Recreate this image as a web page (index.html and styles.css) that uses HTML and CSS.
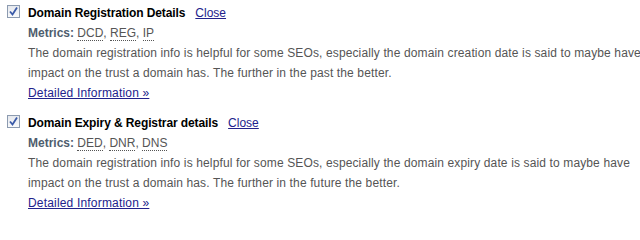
FILE: index.html
```html
<!DOCTYPE html>
<html>
<head>
<meta charset="utf-8">
<link rel="stylesheet" href="styles.css">
</head>
<body>
<div class="list">
  <div class="item">
    <span class="check"><svg width="13" height="13" viewBox="0 0 13 13"><path d="M3 6.5 L5.5 9.5 L10 2.5" fill="none" stroke="#3a5aa8" stroke-width="1.8"/></svg></span>
    <div class="content">
      <div class="title"><b>Domain Registration Details</b><a href="#" class="close">Close</a></div>
      <div class="metrics"><span class="label">Metrics:</span> <abbr>DCD</abbr>, <abbr>REG</abbr>, <abbr>IP</abbr></div>
      <p class="desc">The domain registration info is helpful for some SEOs, especially the domain creation date is said to maybe have impact on the trust a domain has. The further in the past the better.</p>
      <a href="#" class="more">Detailed Information »</a>
    </div>
  </div>
  <div class="item">
    <span class="check"><svg width="13" height="13" viewBox="0 0 13 13"><path d="M3 6.5 L5.5 9.5 L10 2.5" fill="none" stroke="#3a5aa8" stroke-width="1.8"/></svg></span>
    <div class="content">
      <div class="title"><b>Domain Expiry &amp; Registrar details</b><a href="#" class="close">Close</a></div>
      <div class="metrics"><span class="label">Metrics:</span> <abbr>DED</abbr>, <abbr>DNR</abbr>, <abbr>DNS</abbr></div>
      <p class="desc">The domain registration info is helpful for some SEOs, especially the domain expiry date is said to maybe have impact on the trust a domain has. The further in the future the better.</p>
      <a href="#" class="more">Detailed Information »</a>
    </div>
  </div>
</div>
</body>
</html>
```
FILE: styles.css
```css
html, body {
  margin: 0;
  padding: 0;
  background: #fff;
  overflow: hidden;
}
body {
  font-family: "Liberation Sans", Arial, sans-serif;
  font-size: 12px;
  line-height: 20px;
  color: #555;
}
.list {
  padding: 3px 0 0 7px;
  width: 700px;
}
.item {
  display: flex;
  gap: 8px;
  margin-bottom: 10px;
}
.check {
  flex: none;
  width: 13px;
  height: 13px;
  margin-top: 2px;
  box-sizing: border-box;
  border: 1px solid #8c9bb0;
  background: linear-gradient(#e6e9ee, #f8f9fb);
  position: relative;
}
.check svg {
  position: absolute;
  left: -1px;
  top: -1px;
}
.content {
  width: 640px;
}
.title b {
  color: #000;
  font-weight: bold;
  letter-spacing: -0.1px;
}
.close {
  margin-left: 10px;
}
a {
  color: #22228c;
  text-decoration: underline;
}
.metrics .label {
  color: #4e5d6e;
  font-weight: bold;
}
abbr {
  text-decoration: none;
  border-bottom: 1px dotted #555;
}
.desc {
  margin: 0;
  letter-spacing: 0.13px;
}
.more {
  display: inline-block;
  letter-spacing: 0.18px;
}
```
